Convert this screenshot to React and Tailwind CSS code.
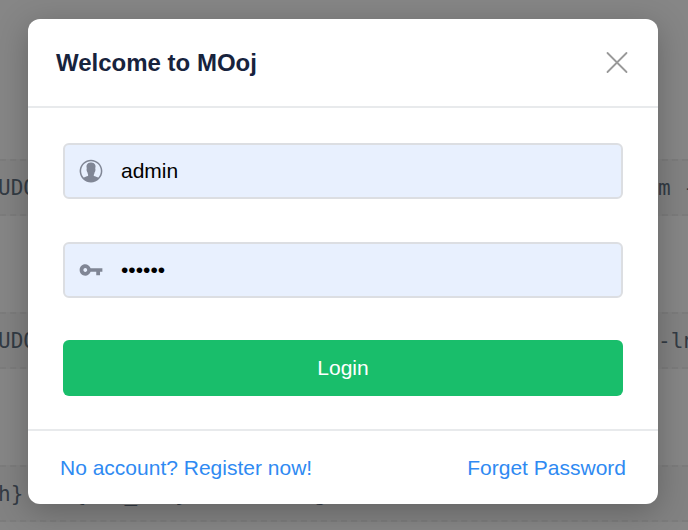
import { IoIosContact, IoMdKey } from "react-icons/io";

function CodeRow({ start, end }) {
  return (
    <div className="flex h-[57px] items-center justify-between overflow-hidden border-y-2 border-dashed border-[#7c7c7c] bg-[#828282] pt-0.5 whitespace-pre">
      <code className="-ml-0.5 font-['DejaVu_Sans_Mono',monospace] text-[21px]">{start}</code>
      <code className="-mr-2 font-['DejaVu_Sans_Mono',monospace] text-[21px]">{end}</code>
    </div>
  );
}

function Backdrop() {
  return (
    <div
      aria-hidden="true"
      className="absolute inset-0 flex flex-col gap-24 overflow-hidden bg-[#868686] pt-[159px] text-[#333b44]"
    >
      <CodeRow start="UDO" end="m -" />
      <CodeRow start="UDO" end="-ln" />
      <CodeRow start="h} -d {exe_dir}  -encoding" end="" />
    </div>
  );
}

function Field({ id, label, icon: Icon, ...props }) {
  return (
    <div className="flex h-14 items-center rounded-md border-2 border-[#dcdee2] bg-[#e8f0fe]">
      <label htmlFor={id} aria-label={label} className="flex w-14 shrink-0 pl-3 text-[#808695]">
        <Icon className="size-7" />
      </label>
      <input
        id={id}
        className="h-full min-w-0 flex-1 bg-transparent text-[21px] text-black outline-none"
        {...props}
      />
    </div>
  );
}

export default function App() {
  return (
    <div className="relative min-h-screen pt-[19px] pr-[30px] pb-[26px] pl-7 font-['Liberation_Sans',Arial,sans-serif]">
      <Backdrop />
      <section
        role="dialog"
        aria-labelledby="login-title"
        className="relative rounded-xl bg-white shadow-[0_7px_32px_rgba(0,0,0,0.25)]"
      >
        <header className="flex h-[89px] items-center justify-between border-b-2 border-[#e8eaec] px-7">
          <h1 id="login-title" className="text-2xl font-bold text-[#17233d]">
            Welcome to MOoj
          </h1>
          <button type="button" aria-label="Close" className="text-[#999]">
            <svg
              viewBox="0 0 26 26"
              className="size-[26px]"
              fill="none"
              stroke="currentColor"
              strokeWidth="1.8"
              strokeLinecap="round"
            >
              <path d="M3.5 3 22.5 22M22.5 3 3.5 22" />
            </svg>
          </button>
        </header>

        <form className="flex flex-col gap-[42px] px-[35px] pt-[35px] pb-[33px]">
          <div className="flex flex-col gap-[43px]">
            <Field id="username" label="Username" icon={IoIosContact} type="text" defaultValue="admin" />
            <Field id="password" label="Password" icon={IoMdKey} type="password" defaultValue="123456" />
          </div>
          <button type="button" className="h-14 rounded-md bg-[#19be6b] text-[21px] text-white">
            Login
          </button>
        </form>

        <footer className="flex h-[75px] items-center justify-between border-t-2 border-[#e8eaec] px-8 text-[21px] text-[#2f8af2]">
          <a href="#register">No account? Register now!</a>
          <a href="#forget">Forget Password</a>
        </footer>
      </section>
    </div>
  );
}
